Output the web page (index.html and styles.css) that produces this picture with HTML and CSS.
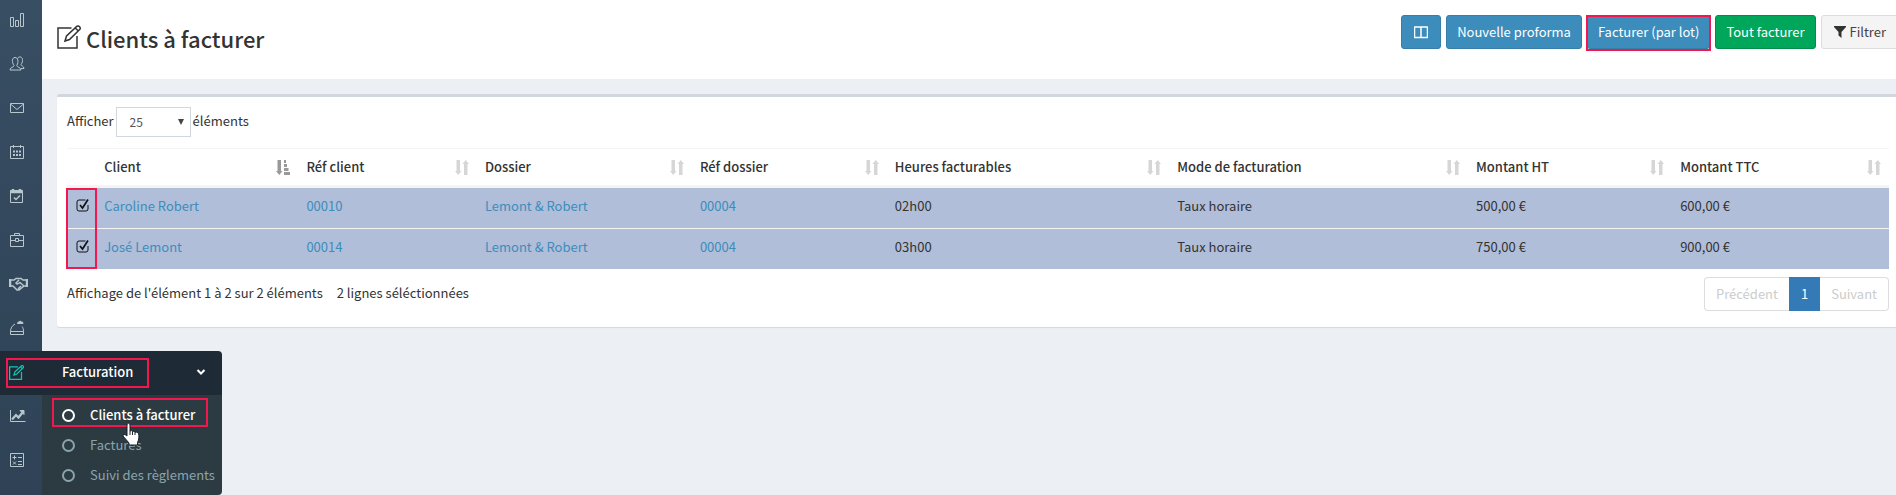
FILE: index.html
```html
<!DOCTYPE html>
<html lang="fr">
<head>
<meta charset="utf-8">
<title>Clients à facturer</title>
<link rel="stylesheet" href="styles.css">
</head>
<body>
<svg class="defs" aria-hidden="true">
  <symbol id="i-edit" viewBox="0 0 24 24"><path d="M14.500 3H1v20h19V11M8 16l1.500-5L20 1.200q1.500-.7 2.600.5t.3 2.600L12.500 14.500z M18.300 3l3 3"/></symbol>
  <symbol id="i-sort" viewBox="0 0 14 15"><path d="M1.500 0h3.500v11h1.500L3.250 15 0 11h1.500zM9 15h3.500V4H14l-3.250-4L7.500 4H9z"/></symbol>
</svg>
<div class="app">
  <nav class="sidebar" aria-label="Menu principal">
    <ul class="menu">
      <li><a href="#" aria-label="Tableau de bord"><svg class="ico" viewBox="0 0 16 16"><path d="M1.500 5.500h3v9h-3zM6.500 8.500h3v6h-3zM11.500 1.500h3v13h-3z"/></svg></a></li>
      <li><a href="#" aria-label="Contacts"><svg class="ico" viewBox="0 0 16 16"><path d="M1 14c0-3 4-2.500 4-4.500C2.500 6 3 1.500 6 1.500s4 4 1.800 8c0 2 4.200 1.500 4.200 4.500zM8.500 2.500C10-.5 14 1 13.500 4.500c0 2-1 3.500-1.500 4 0 1.500 3 1.500 3 4h-3"/></svg></a></li>
      <li><a href="#" aria-label="Messages"><svg class="ico" viewBox="0 0 16 16"><path d="M1.500 3.500h13v9h-13zM1.500 4L8 9.500 14.500 4"/></svg></a></li>
      <li><a href="#" aria-label="Agenda"><svg class="ico" viewBox="0 0 16 16"><path d="M1.500 2.500h13v12h-13zM4.500 1v3M11.500 1v3"/><path d="M4 7.500h2m1 0h2m1 0h2M4 11h2m1 0h2m1 0h2" stroke-width="2"/></svg></a></li>
      <li><a href="#" aria-label="Échéances"><svg class="ico" viewBox="0 0 16 16"><path d="M1.500 2.500h12v12h-12z"/><path d="M5 9.500l2 2 4-4" stroke-width="1.500"/><path d="M1 4h13M4 1v3M11 1v3" stroke-width="2.500"/></svg></a></li>
      <li><a href="#" aria-label="Dossiers"><svg class="ico" viewBox="0 0 16 16"><path d="M1.500 3.500h13v11h-13zM5.500 3.500v-2h5v2M1.500 8.500h5m3 0h5M6.500 6.500h3v3h-3z"/></svg></a></li>
      <li><a href="#" aria-label="Partenaires"><svg class="ico wide" viewBox="0 0 19 14"><path d="M1 2v8M18 2v8" stroke-width="2.500"/><path d="M2 3h3l2-1.500h5L14 3h3M2 9h2l4 4h2l5-4h2M10 3L7 6q1.500 2 4-.5L15 9M9 12l3-3" stroke-width="1.500"/></svg></a></li>
      <li><a href="#" aria-label="Services"><svg class="ico" viewBox="0 0 16 16"><path d="M1.500 11.500h13v3h-13zM1.500 11.500c0-3 1.500-6 4.500-7.500M14.500 11.500c0-2-.5-4-1.500-5"/><path d="M8.500 3.500q0-2 1.800-1.500Q11 0 12.500 2q1.500-.5 1.500 1.500z" fill="currentColor"/></svg></a></li>
      <li class="active">
        <a href="#" class="parent"><svg class="ico" viewBox="0 0 24 24"><use href="#i-edit"/></svg><span class="parent-label">Facturation</span><svg class="chevron" viewBox="0 0 10 8"><path d="M1.500 2L5 5.500 8.500 2"/></svg></a>
        <ul class="submenu">
          <li><a href="#" class="current"><span class="ring"></span>Clients à facturer</a></li>
          <li><a href="#"><span class="ring"></span>Factures</a></li>
          <li><a href="#"><span class="ring"></span>Suivi des règlements</a></li>
        </ul>
        <span class="mark mark-parent"></span>
        <span class="mark mark-current"></span>
        <svg class="pointer" viewBox="0 0 18 24"><path d="M5 2.500Q6.500 0 8 2.500V9q1.500-1 2.500.5 1.700-1 2.500.7 2-.8 3.500 1.300c.8 3 .5 6-1 9V23H7v-2L1 14q-.5-2 2-1.500L5 14z"/><path d="M8 9v4M10.500 9.500V13M13 10.200V13"/></svg>
      </li>
      <li><a href="#" aria-label="Statistiques"><svg class="ico wide-2" viewBox="0 0 17 14"><path d="M1.500 1v11.500h15"/><path d="M3 10.500L7 6l2.500 2.500 4-5" stroke-width="2.200"/><path d="M11 1.500h4v4z" fill="currentColor"/></svg></a></li>
      <li><a href="#" aria-label="Comptabilité"><svg class="ico" viewBox="0 0 16 16"><path d="M1.500 1.500h13v13h-13zM3.500 5.500h4M5.500 3.500v4M9 5.500h4M4 9.500l3 3m0-3l-3 3M9 9.500h4M9 12.500h4"/></svg></a></li>
    </ul>
  </nav>

  <main class="content">
    <header class="page-head">
      <h1 class="title"><svg class="title-ico" viewBox="0 0 24 24"><use href="#i-edit"/></svg>Clients à facturer</h1>
      <div class="actions">
        <button type="button" class="btn primary icon-only" aria-label="Colonnes"><svg class="cols-ico" viewBox="0 0 14 14"><path d="M.5 2h13M.5 1.500v11h13v-11M7 2v10"/></svg></button>
        <button type="button" class="btn primary">Nouvelle proforma</button>
        <span class="marked"><button type="button" class="btn primary">Facturer (par lot)</button><span class="mark mark-btn"></span></span>
        <button type="button" class="btn success">Tout facturer</button>
        <button type="button" class="btn plain"><svg class="filter-ico" viewBox="0 0 12 12"><path d="M0 0h12v1L7.500 6v6L4.500 9.500V6L0 1z"/></svg>Filtrer</button>
      </div>
    </header>

    <section class="card">
      <div class="length">
        <label for="len">Afficher</label>
        <span class="select"><select id="len"><option>25</option></select></span>
        <span>éléments</span>
      </div>
      <div class="table-wrap">
        <table>
          <colgroup><col class="c-check"><col class="c-client"><col class="c-ref"><col class="c-dossier"><col class="c-refd"><col class="c-hours"><col class="c-mode"><col class="c-ht"><col class="c-ttc"></colgroup>
          <thead>
            <tr>
              <th></th>
              <th><div class="th">Client<svg class="sort on" viewBox="0 0 14 15"><path d="M1.500 0h3.500v11h1.500L3.250 15 0 11h1.500zM8 0h2v3H8zM8 4h3v3H8zM8 8h4.500v3H8zM8 12h6v3H8z"/></svg></div></th>
              <th><div class="th">Réf client<svg class="sort"><use href="#i-sort"/></svg></div></th>
              <th><div class="th">Dossier<svg class="sort"><use href="#i-sort"/></svg></div></th>
              <th><div class="th">Réf dossier<svg class="sort"><use href="#i-sort"/></svg></div></th>
              <th><div class="th">Heures facturables<svg class="sort"><use href="#i-sort"/></svg></div></th>
              <th><div class="th">Mode de facturation<svg class="sort"><use href="#i-sort"/></svg></div></th>
              <th><div class="th">Montant HT<svg class="sort"><use href="#i-sort"/></svg></div></th>
              <th><div class="th">Montant TTC<svg class="sort"><use href="#i-sort"/></svg></div></th>
            </tr>
          </thead>
          <tbody>
            <tr>
              <td><input type="checkbox" class="check" checked aria-label="Caroline Robert"></td>
              <td><a href="#">Caroline Robert</a></td><td><a href="#">00010</a></td><td><a href="#">Lemont &amp; Robert</a></td><td><a href="#">00004</a></td>
              <td>02h00</td><td>Taux horaire</td><td>500,00 €</td><td>600,00 €</td>
            </tr>
            <tr>
              <td><input type="checkbox" class="check" checked aria-label="José Lemont"></td>
              <td><a href="#">José Lemont</a></td><td><a href="#">00014</a></td><td><a href="#">Lemont &amp; Robert</a></td><td><a href="#">00004</a></td>
              <td>03h00</td><td>Taux horaire</td><td>750,00 €</td><td>900,00 €</td>
            </tr>
          </tbody>
        </table>
        <span class="mark mark-checks"></span>
      </div>
      <footer class="table-foot">
        <div class="info"><span>Affichage de l'élément 1 à 2 sur 2 éléments</span><span>2 lignes séléctionnées</span></div>
        <div class="pager"><button type="button" disabled>Précédent</button><button type="button" class="on">1</button><button type="button" disabled>Suivant</button></div>
      </footer>
    </section>
  </main>
</div>
</body>
</html>
```

FILE: styles.css
```css
* { box-sizing: border-box; }
body {
  margin: 0;
  overflow: hidden;
  background: #ecf0f5;
  color: #333;
  font-family: "Noto Sans CJK SC", "Noto Sans", sans-serif;
  font-size: 13px;
  line-height: 20px;
}
ul { list-style: none; margin: 0; padding: 0; }
a { color: #3c8dbc; text-decoration: none; }
button, select { font: inherit; }
svg { display: block; flex: none; }
.defs { position: absolute; width: 0; height: 0; }

.app { display: flex; min-height: 100vh; }

/* Sidebar */
.sidebar {
  flex: none;
  width: 42px;
  background: linear-gradient(#384e63, #2f4256);
}
.menu { margin-top: -1px; }
.menu > li > a {
  display: flex;
  align-items: center;
  height: 44px;
  padding: 0 0 2px 9px;
  color: #b8c7ce;
}
.ico { width: 16px; height: 16px; fill: none; stroke: currentColor; stroke-width: 1; }
.wide { width: 19px; height: 14px; }
.wide-2 { width: 17px; height: 14px; }
.menu > .active { position: relative; z-index: 2; }
.menu > .active > .parent {
  width: 222px;
  padding-right: 16px;
  background: #1e2a36;
  border-top-right-radius: 4px;
  color: #14c4b4;
}
.parent .ico { width: 15px; height: 15px; stroke-width: 2; }
.parent-label { flex: 1; padding-left: 38px; color: #fff; font-weight: 500; }
.chevron { width: 10px; height: 8px; fill: none; stroke: #fff; stroke-width: 2; }
.submenu {
  position: absolute;
  top: 100%;
  left: 42px;
  width: 180px;
  padding: 5px 0;
  background: #2c3b41;
  border-bottom-right-radius: 4px;
}
.submenu a {
  display: flex;
  align-items: center;
  gap: 15px;
  height: 30px;
  padding-left: 20px;
  color: #8aa4af;
  white-space: nowrap;
}
.submenu .current { color: #fff; font-weight: 500; }
.ring { width: 13px; height: 13px; border: 2px solid; border-radius: 50%; }
.pointer { position: absolute; top: 71px; left: 122px; width: 18px; height: 24px; fill: #fff; stroke: #1b2229; }

/* Highlight frames */
.mark { position: absolute; border: 2px solid #f2184f; pointer-events: none; }
.mark-parent { top: 7px; left: 6px; width: 143px; height: 30px; }
.mark-current { top: 47px; left: 52px; width: 156px; height: 29px; }
.mark-btn { inset: 0 -1px -2px; }
.mark-checks { left: -1px; bottom: 0; width: 31px; height: 81px; }
.marked { position: relative; display: flex; }

/* Page head */
.content { flex: 1; min-width: 0; margin-right: -3px; }
.page-head {
  display: flex;
  justify-content: space-between;
  align-items: flex-start;
  height: 79px;
  padding: 15px 0 0 15px;
  background: #fff;
}
.title {
  display: flex;
  align-items: center;
  gap: 5px;
  margin: 7px 0 0;
  font-size: 22px;
  line-height: 32px;
  font-weight: 500;
}
.title-ico { width: 24px; height: 24px; margin-bottom: 2px; fill: none; stroke: #333; stroke-width: 1.5; }
.actions { display: flex; gap: 5px; }
.btn {
  display: flex;
  align-items: center;
  gap: 4px;
  height: 34px;
  padding: 0 10px;
  border: 1px solid;
  border-radius: 3px;
  color: #fff;
  white-space: nowrap;
}
.icon-only { padding: 0 12px; }
.primary { background: #3c8dbc; border-color: #367fa9; }
.success { background: #00a65a; border-color: #008d4c; }
.plain { padding: 0 12px; background: #f4f4f4; border-color: #ddd; color: #444; }
.cols-ico { width: 14px; height: 14px; fill: none; stroke: #fff; stroke-width: 1.5; }
.filter-ico { width: 12px; height: 12px; fill: #333; }

/* Card */
.card {
  margin: 15px 0 0 15px;
  padding: 10px;
  background: #fff;
  border-top: 3px solid #d2d6de;
  border-radius: 3px;
  box-shadow: 0 1px 1px rgba(0, 0, 0, .1);
}
.length { display: flex; align-items: center; gap: 2px; height: 30px; }
.length label, .length > span:last-child { padding-bottom: 2px; }
.select { position: relative; display: flex; }
.select::after {
  content: "";
  position: absolute;
  top: 12px;
  right: 7px;
  border: 3px solid transparent;
  border-top: 6px solid #444;
}
select {
  appearance: none;
  width: 75px;
  height: 30px;
  padding: 0 13px;
  border: 1px solid #d2d6de;
  border-radius: 0;
  background: #fff;
  color: #555;
  font-size: 12px;
}
.table-wrap { position: relative; margin-top: 11px; }
table { width: 100%; table-layout: fixed; border-collapse: separate; border-spacing: 0; }
.c-check { width: 1.6%; }
.c-client { width: 11.1%; }
.c-ref { width: 9.8%; }
.c-dossier { width: 11.8%; }
.c-refd { width: 10.7%; }
.c-hours { width: 15.5%; }
.c-mode { width: 16.4%; }
.c-ht { width: 11.2%; }
.c-ttc { width: 11.9%; }
th, td { padding: 0 8px; text-align: left; white-space: nowrap; }
th { height: 40px; border-top: 1px solid #f4f4f4; border-bottom: 3px solid #f4f4f4; font-weight: 500; }
.th { display: flex; justify-content: space-between; align-items: center; }
.sort { width: 14px; height: 15px; fill: #d6d6d6; }
.sort.on { fill: #999; }
td { height: 40px; padding-bottom: 4px; background: #b0bed9; }
tr + tr td { height: 41px; border-top: 1px solid #f4f4f4; }
.check {
  appearance: none;
  display: block;
  width: 13px;
  height: 13px;
  margin: 0 0 2px 1px;
  background: url("data:image/svg+xml,%3Csvg xmlns='http://www.w3.org/2000/svg' viewBox='0 0 13 13' fill='none' stroke='%23111'%3E%3Cpath d='M9.500 1H3Q1 1 1 3v7q0 2 2 2h7q2 0 2-2V6'/%3E%3Cpath d='M4 6l2.500 3L12 .5' stroke-width='1.700'/%3E%3C/svg%3E") center / 13px 13px no-repeat;
}
.table-foot { display: flex; justify-content: space-between; align-items: center; margin: 8px 0 6px; }
.info { display: flex; gap: 14px; padding-bottom: 2px; }
.pager { display: flex; }
.pager button {
  height: 34px;
  padding: 0 11px;
  border: 1px solid #ddd;
  background: #fff;
  color: #ccc;
}
.pager button:first-child { border-right: 0; border-radius: 4px 0 0 4px; }
.pager button:last-child { border-left: 0; border-radius: 0 4px 4px 0; }
.pager .on { background: #337ab7; border-color: #337ab7; color: #fff; }
```
